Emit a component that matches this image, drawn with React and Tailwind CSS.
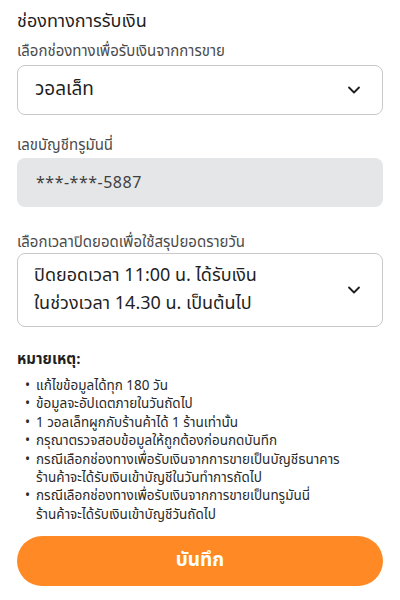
import { ChevronDown } from "lucide-react"

const notes = [
    ["แก้ไขข้อมูลได้ทุก 180 วัน"],
    ["ข้อมูลจะอัปเดตภายในวันถัดไป"],
    ["1 วอลเล็ทผูกกับร้านค้าได้ 1 ร้านเท่านั้น"],
    ["กรุณาตรวจสอบข้อมูลให้ถูกต้องก่อนกดบันทึก"],
    ["กรณีเลือกช่องทางเพื่อรับเงินจากการขายเป็นบัญชีธนาคาร", "ร้านค้าจะได้รับเงินเข้าบัญชีในวันทำการถัดไป"],
    ["กรณีเลือกช่องทางเพื่อรับเงินจากการขายเป็นทรูมันนี่", "ร้านค้าจะได้รับเงินเข้าบัญชีวันถัดไป"],
]

export default function App() {
    return (
        <div className="w-[400px] h-[600px] bg-white px-[17px] pt-[9px] text-[#1f1f1f]" style={{ fontFamily: '"Noto Sans Thai", "Noto Sans", sans-serif' }}>
            <h1 className="text-[18px] leading-[26px]">ช่องทางการรับเงิน</h1>
            <p className="mt-[6px] text-[15px] leading-[22px] text-[#4b4b4b]">เลือกช่องทางเพื่อรับเงินจากการขาย</p>
            <div className="mt-[2px] h-[50px] rounded-lg border border-[#c9c9c9] flex items-center justify-between pl-[17px] pr-[18px]">
                <span className="text-[19px]">วอลเล็ท</span>
                <ChevronDown size={20} strokeWidth={2.2} />
            </div>

            <p className="mt-[20px] text-[15px] leading-[22px] text-[#4b4b4b]">เลขบัญชีทรูมันนี่</p>
            <div className="mt-[1px] h-[49px] rounded-lg bg-[#e5e6e8] flex items-center pl-[19px]">
                <span className="text-[16px] text-[#3f3f3f] tracking-[0.5px]">***-***-5887</span>
            </div>

            <p className="mt-[25px] text-[15px] leading-[22px] text-[#4b4b4b]">เลือกเวลาปิดยอดเพื่อใช้สรุปยอดรายวัน</p>
            <div className="-mt-px h-[74px] rounded-lg border border-[#c9c9c9] flex items-center justify-between pl-[16px] pr-[18px]">
                <span className="text-[18px] leading-[28px]">ปิดยอดเวลา 11:00 น. ได้รับเงิน<br />ในช่วงเวลา 14.30 น. เป็นต้นไป</span>
                <ChevronDown size={20} strokeWidth={2.2} />
            </div>

            <p className="mt-[22px] text-[15px] font-bold leading-[22px]">หมายเหตุ:</p>
            <ul className="mt-[6px] text-[13.5px] leading-[18.4px] text-[#2a2a2a]">
                {notes.map((n, i) => (
                    <li key={i} className="flex">
                        <span className="w-[11px] shrink-0 pl-[8px]">•</span>
                        <span className="pl-[8px]">
                            {n.map((line, j) => <span key={j} className="block">{line}</span>)}
                        </span>
                    </li>
                ))}
            </ul>

            <button className="mt-[12px] w-full h-[50px] rounded-full bg-[#ff8a25] text-white text-[19px] font-bold">บันทึก</button>
        </div>
    )
}
